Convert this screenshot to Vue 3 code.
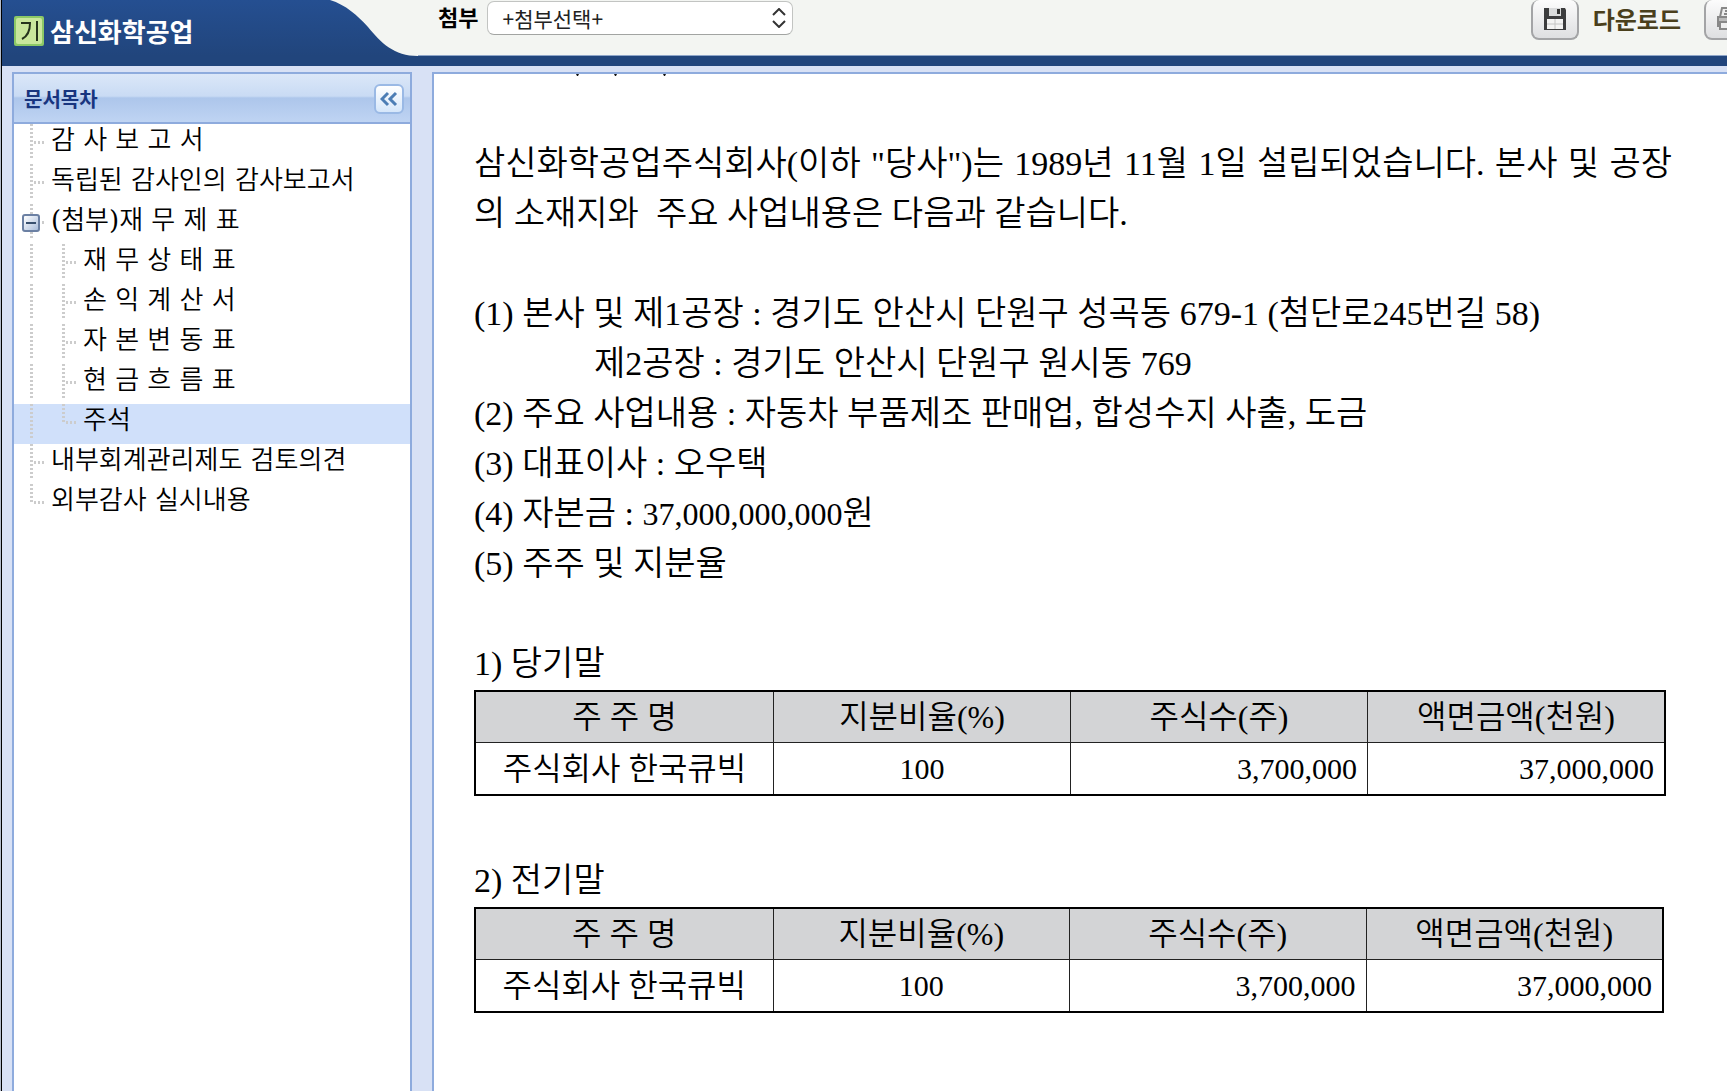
<template>
  <div class="viewer">
    <header class="top-bar">
      <div class="brand">
        <svg class="brand-icon" viewBox="0 0 30 30" aria-hidden="true">
          <rect width="30" height="30" rx="2" fill="#8cc866" />
          <rect x="2" y="2" width="26" height="26" rx="2" fill="#c9e79c" />
          <path d="M7 7h9c0 8-2 13-8 16M23 5v20" fill="none" stroke="#26341c" stroke-width="2" />
        </svg>
        <h1 class="company">삼신화학공업</h1>
      </div>
      <svg class="curve" viewBox="0 0 88 56" preserveAspectRatio="none" aria-hidden="true">
        <path d="M0 0C16 5 27 15 38 27C51 43 64 56 88 56V0Z" fill="#f3f5f2" />
      </svg>
      <div class="tools">
        <label class="attach-label" for="attach">첨부</label>
        <div class="select-wrap">
          <select id="attach" v-model="attachment" class="attach">
            <option value="">+첨부선택+</option>
          </select>
          <svg class="arrows" viewBox="0 0 14 20" aria-hidden="true">
            <path d="M1 7l6-6 6 6M1 13l6 6 6-6" fill="none" stroke="#333" stroke-width="2" />
          </svg>
        </div>
        <button class="download" type="button">
          <span class="tool-icon">
            <svg viewBox="0 0 24 24" aria-hidden="true">
              <path d="M1 1h21l1 2v20H1z" fill="#3c3c3e" />
              <path d="M6 1h12v8H6z" fill="#d9dadb" />
              <path d="M14 2h3v5h-3z" fill="#333" />
              <path d="M4 12h16v10H4z" fill="#f3f3f3" />
              <path d="M4 17h16M12 12v10" stroke="#c4c4c4" />
            </svg>
          </span>
          다운로드
        </button>
        <button class="print" type="button" aria-label="인쇄">
          <span class="tool-icon">
            <svg viewBox="0 0 24 24" aria-hidden="true">
              <path d="M6 1h14v9H4z" fill="#eee" stroke="#888" stroke-width="2" />
              <path d="M9 4h9M8 7h9" stroke="#888" stroke-width="2" />
              <path d="M2 10h20v9H2z" fill="#bbb" stroke="#888" stroke-width="2" />
              <path d="M4 15h14v7H4z" fill="#eee" stroke="#888" stroke-width="2" />
            </svg>
          </span>
        </button>
      </div>
    </header>

    <div class="body">
      <aside class="sidebar">
        <div class="sidebar-head">
          <h2 class="sidebar-title">문서목차</h2>
          <button class="collapse" type="button" aria-label="목차 접기">
            <svg viewBox="0 0 18 16" aria-hidden="true">
              <path d="M8 2L2 8l6 6M16 2l-6 6 6 6" fill="none" stroke="#4c7db5" stroke-width="3" />
            </svg>
          </button>
        </div>
        <nav class="tree">
          <div
            v-for="item in contents"
            :key="item.title"
            class="row"
            :class="{ child: item.child, last: item.last, selected: item.title === selected }"
          >
            <span v-if="item.child" class="rail"></span>
            <span class="branch">
              <button v-if="item.open" class="toggle" type="button" aria-label="접기"></button>
            </span>
            <a class="link" href="#" @click.prevent="selected = item.title">{{ item.title }}</a>
          </div>
        </nav>
      </aside>

      <main class="document">
        <!-- tail of the line scrolled above the pane -->
        <svg class="scrolled" viewBox="0 0 240 2" aria-hidden="true">
          <path d="M102 0h3l-1 2h-1zM140 0h3l-1 2h-1zM189 0h3l-1 2h-1z" fill="#111" />
        </svg>
        <p class="intro">
          삼신화학공업주식회사(이하 "당사")는 1989년 11월 1일 설립되었습니다. 본사 및 공장의 소재지와&nbsp; 주요 사업내용은 다음과 같습니다.
        </p>
        <div class="facts">
          <p>(1) 본사 및 제1공장 : 경기도 안산시 단원구 성곡동 679-1 (첨단로245번길 58)</p>
          <p class="indent">제2공장 : 경기도 안산시 단원구 원시동 769</p>
          <p>(2) 주요 사업내용 : 자동차 부품제조 판매업, 합성수지 사출, 도금</p>
          <p>(3) 대표이사 : 오우택</p>
          <p>(4) 자본금 : <span class="sum">37,000,000,000</span>원</p>
          <p>(5) 주주 및 지분율</p>
        </div>
        <section v-for="period in periods" :key="period.title" class="period">
          <p>{{ period.title }}</p>
          <table class="holders">
            <thead>
              <tr>
                <th v-for="head in heads" :key="head" scope="col">{{ head }}</th>
              </tr>
            </thead>
            <tbody>
              <tr v-for="row in period.rows" :key="row.name">
                <td>{{ row.name }}</td>
                <td class="number">{{ row.ratio }}</td>
                <td class="number amount">{{ row.shares }}</td>
                <td class="number amount">{{ row.value }}</td>
              </tr>
            </tbody>
          </table>
        </section>
      </main>
    </div>
  </div>
</template>

<script setup>
import { ref } from 'vue'

const attachment = ref('')
const selected = ref('주석')

const contents = [
  { title: '감 사 보 고 서' },
  { title: '독립된 감사인의 감사보고서' },
  { title: '(첨부)재 무 제 표', open: true },
  { title: '재 무 상 태 표', child: true },
  { title: '손 익 계 산 서', child: true },
  { title: '자 본 변 동 표', child: true },
  { title: '현 금 흐 름 표', child: true },
  { title: '주석', child: true, last: true },
  { title: '내부회계관리제도 검토의견' },
  { title: '외부감사 실시내용', last: true },
]

const heads = ['주 주 명', '지분비율(%)', '주식수(주)', '액면금액(천원)']

const periods = [
  {
    title: '1) 당기말',
    rows: [{ name: '주식회사 한국큐빅', ratio: '100', shares: '3,700,000', value: '37,000,000' }],
  },
  {
    title: '2) 전기말',
    rows: [{ name: '주식회사 한국큐빅', ratio: '100', shares: '3,700,000', value: '37,000,000' }],
  },
]
</script>

<style>
body {
  margin: 0;
}
</style>

<style scoped>
.viewer {
  box-sizing: border-box;
  display: flex;
  flex-direction: column;
  min-height: 100vh;
  border-left: 1px solid #b4bccb;
  padding-left: 1px;
  background: #000;
  overflow: hidden;
  font-family: 'Noto Sans CJK KR', sans-serif;
}

h1,
h2,
p {
  margin: 0;
}

button {
  padding: 0;
  font-family: inherit;
  cursor: pointer;
}

.top-bar {
  display: flex;
  height: 56px;
  border-bottom: 10px solid #21457c;
  background: linear-gradient(#254f91, #21457c);
}

.brand {
  box-sizing: border-box;
  flex: none;
  display: flex;
  align-items: center;
  gap: 6px;
  width: 328px;
  padding: 6px 0 0 12px;
}

.brand-icon {
  width: 30px;
  height: 30px;
}

.company {
  font-size: 26px;
  line-height: 40px;
  color: #fff;
}

.curve {
  flex: none;
  width: 88px;
  height: 56px;
}

.tools {
  flex: 1;
  min-width: 0;
  display: flex;
  align-items: flex-start;
  padding-left: 20px;
  background: #f3f5f2;
  box-shadow: inset 0 -1px #8ea5c8;
}

.attach-label {
  flex: none;
  font-size: 22px;
  font-weight: 700;
  line-height: 32px;
}

.select-wrap {
  position: relative;
  flex: none;
  width: 306px;
  margin: 1px auto 0 9px;
}

.attach {
  appearance: none;
  display: block;
  width: 100%;
  height: 34px;
  border: 1px solid #c2c4c2;
  border-bottom-color: #a2a4a2;
  border-radius: 7px;
  padding: 0 14px;
  background: #fff;
  color: #222;
  font-family: inherit;
  font-size: 21px;
}

.arrows {
  position: absolute;
  top: 7px;
  right: 7px;
  width: 14px;
  height: 20px;
  pointer-events: none;
}

.download,
.print {
  flex: none;
  display: flex;
  align-items: flex-start;
  gap: 14px;
  border: 0;
  background: none;
  color: #4a3f1c;
  font-size: 24px;
  font-weight: 700;
  line-height: 38px;
}

.print {
  width: 23px;
  margin-left: 23px;
  overflow: hidden;
}

.tool-icon {
  box-sizing: border-box;
  flex: none;
  display: flex;
  justify-content: center;
  width: 48px;
  height: 40px;
  border: 2px solid #a3a4a6;
  border-top: 0;
  border-radius: 8px;
  padding-top: 7px;
  background: linear-gradient(#fcfcfc, #dedfe1);
}

.tool-icon svg {
  width: 24px;
  height: 24px;
}

.body {
  flex: 1;
  display: flex;
  gap: 20px;
  padding: 6px 0 0 10px;
  background: #d8e1f5;
}

.sidebar {
  box-sizing: border-box;
  flex: none;
  width: 400px;
  border: 2px solid #8eabdd;
  border-bottom: 0;
  background: #fff;
}

.sidebar-head {
  box-sizing: border-box;
  display: flex;
  align-items: center;
  justify-content: space-between;
  height: 50px;
  border-bottom: 2px solid #8eabdd;
  padding: 2px 6px 0 10px;
  background: linear-gradient(#dbe7f8, #c9dbf4 46%, #adc6eb 50%, #bfd4f3);
}

.sidebar-title {
  font-size: 20px;
  line-height: 28px;
  color: #18357f;
}

.collapse {
  display: flex;
  align-items: center;
  justify-content: center;
  width: 30px;
  height: 30px;
  border: 2px solid #9ab9e5;
  border-radius: 6px;
  background: linear-gradient(#fff, #d5e6fa);
}

.collapse svg {
  flex: none;
  width: 18px;
  height: 16px;
}

.row {
  display: flex;
  height: 40px;
  padding-left: 16px;
}

.row.selected {
  background: #d0e0fa;
}

/* dotted guide lines of the tree */
.rail,
.branch {
  flex: none;
  width: 32px;
  height: 36px;
  background:
    repeating-linear-gradient(#ccc 0 2px, transparent 2px 4px) 0 0 / 3px 100% no-repeat,
    repeating-linear-gradient(90deg, #ccc 0 2px, transparent 2px 4px) 4px 17px / 10px 3px no-repeat;
}

.branch {
  width: 21px;
}

.rail {
  background-size: 3px 100%, 0 0;
}

.last .branch {
  background-size: 3px 20px, 10px 3px;
}

.toggle {
  position: relative;
  left: -8px;
  top: 10px;
  display: block;
  width: 18px;
  height: 18px;
  border: 2px solid #6b80a3;
  border-radius: 3px;
  background:
    linear-gradient(#38506f, #38506f) center / 10px 2px no-repeat,
    linear-gradient(135deg, #fff, #a9bddb);
}

.link {
  font-family: 'DejaVu Serif', 'Noto Sans CJK KR', serif;
  font-size: 26px;
  font-weight: 350;
  line-height: 32px;
  color: #000;
  text-decoration: none;
  white-space: nowrap;
}

.document {
  flex: 1;
  min-width: 0;
  border: solid #8eabdd;
  border-width: 2px 0 0 2px;
  padding: 0 55px 20px 40px;
  background: #fff;
  color: #000;
  font-family: 'Liberation Serif', 'Noto Sans CJK KR', serif;
  font-size: 34px;
  font-weight: 350;
  line-height: 50px;
}

.scrolled {
  display: block;
  width: 240px;
  height: 2px;
}

.intro {
  margin-top: 63px;
  text-align: justify;
  word-break: break-all;
}

.facts {
  margin: 50px 0;
}

.indent {
  padding-left: 120px;
}

.sum {
  font-size: 32px;
}

.period {
  margin-bottom: 60px;
}

.holders {
  width: calc(100% - 6px);
  margin-top: 1px;
  border: 2px solid #000;
  border-spacing: 0;
  table-layout: fixed;
  font-size: 32px;
}

.period:last-child .holders {
  width: calc(100% - 8px);
}

.holders th,
.holders td {
  height: 51px;
  padding: 0 10px;
  border-left: 1px solid #222;
  font-weight: 350;
  line-height: 50px;
  text-align: center;
}

.holders th:first-child,
.holders td:first-child {
  border-left: 0;
}

.holders th {
  height: 50px;
  border-bottom: 1px solid #222;
  background: #d3d4d6;
}

.holders .number {
  font-size: 30px;
}

.holders .amount {
  text-align: right;
}
</style>
